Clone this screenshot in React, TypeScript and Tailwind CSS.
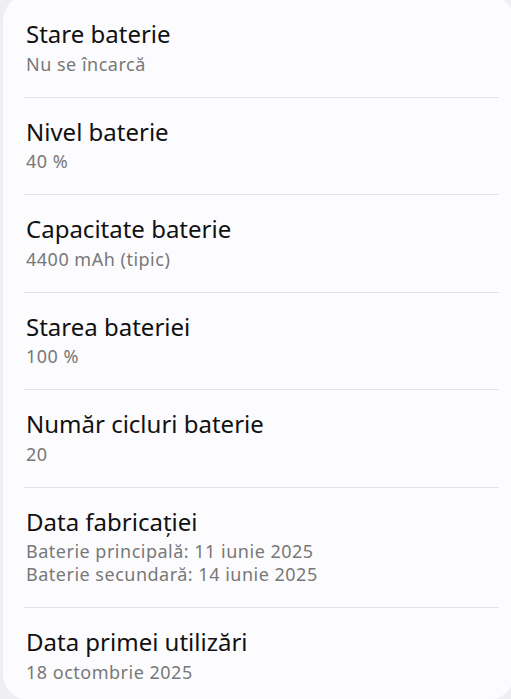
const rows = [
  { title: 'Stare baterie', lines: ['Nu se încarcă'] },
  { title: 'Nivel baterie', lines: ['40 %'] },
  { title: 'Capacitate baterie', lines: ['4400 mAh (tipic)'] },
  { title: 'Starea bateriei', lines: ['100 %'] },
  { title: 'Număr cicluri baterie', lines: ['20'] },
  {
    title: 'Data fabricației',
    lines: ['Baterie principală: 11 iunie 2025', 'Baterie secundară: 14 iunie 2025'],
  },
  { title: 'Data primei utilizări', lines: ['18 octombrie 2025'] },
];

export default function App() {
  return (
    <div className="h-[699px] w-[511px] overflow-hidden bg-[#efeff1] font-['Noto_Sans','Open_Sans',sans-serif]">
      <div className="-mt-[5px] ml-[3px] w-[511px] rounded-[26px] bg-[#fcfcfe] pt-[5px]">
        {rows.map((row, i) => (
          <div key={row.title} className="pl-[21px] pr-[15px]">
            <div
              className={
                i === rows.length - 1
                  ? 'pt-[18px] pb-[16px] pl-[2px]'
                  : 'border-b border-[#e3e3e5] pt-[18px] pb-[21px] pl-[2px]'
              }
            >
              <div className="text-[24px] leading-[32px] text-[#111111]">{row.title}</div>
              <div className="mt-[2.5px]">
                {row.lines.map((line) => (
                  <div key={line} className="text-[18px] leading-[23px] tracking-[0.5px] text-[#787878]">
                    {line}
                  </div>
                ))}
              </div>
            </div>
          </div>
        ))}
      </div>
    </div>
  );
}
